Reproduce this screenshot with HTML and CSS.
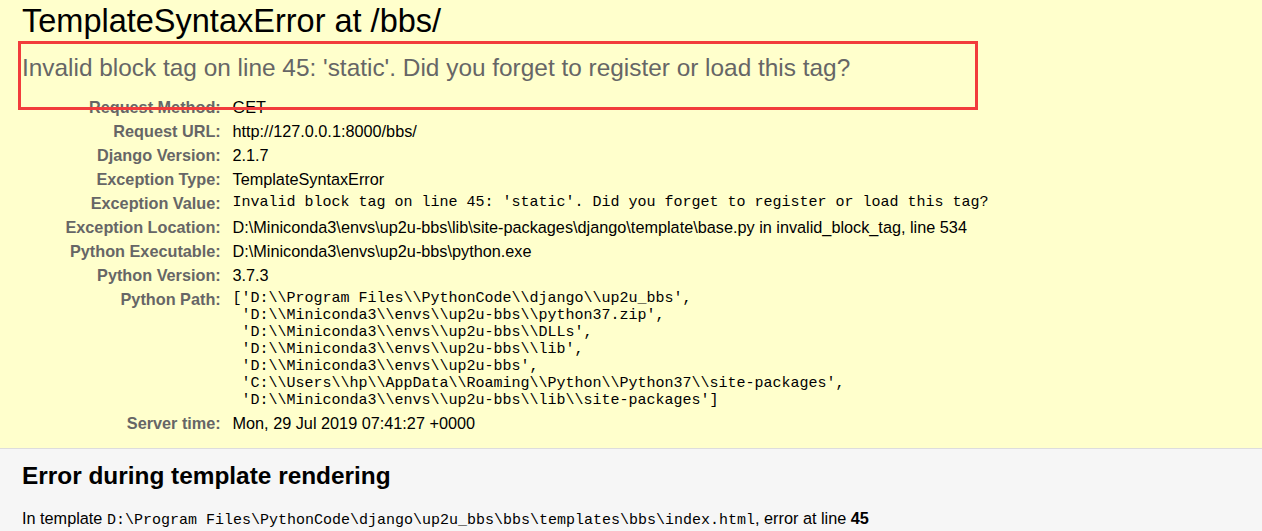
FILE: index.html
```html
<!DOCTYPE html>
<html lang="en">
<head>
<meta charset="utf-8">
<title>TemplateSyntaxError at /bbs/</title>
<link rel="stylesheet" href="styles.css">
</head>
<body>
<div class="summary">
  <h1 class="title">TemplateSyntaxError at /bbs/</h1>
  <pre class="exception-value">Invalid block tag on line 45: 'static'. Did you forget to register or load this tag?</pre>
  <table class="meta">
    <tbody>
      <tr><th>Request Method:</th><td>GET</td></tr>
      <tr><th>Request URL:</th><td>http://127.0.0.1:8000/bbs/</td></tr>
      <tr><th>Django Version:</th><td>2.1.7</td></tr>
      <tr><th>Exception Type:</th><td>TemplateSyntaxError</td></tr>
      <tr><th>Exception Value:</th><td><pre class="mono">Invalid block tag on line 45: 'static'. Did you forget to register or load this tag?</pre></td></tr>
      <tr><th>Exception Location:</th><td>D:\Miniconda3\envs\up2u-bbs\lib\site-packages\django\template\base.py in invalid_block_tag, line 534</td></tr>
      <tr><th>Python Executable:</th><td>D:\Miniconda3\envs\up2u-bbs\python.exe</td></tr>
      <tr><th>Python Version:</th><td>3.7.3</td></tr>
      <tr><th>Python Path:</th><td><pre class="mono">['D:\\Program Files\\PythonCode\\django\\up2u_bbs',
 'D:\\Miniconda3\\envs\\up2u-bbs\\python37.zip',
 'D:\\Miniconda3\\envs\\up2u-bbs\\DLLs',
 'D:\\Miniconda3\\envs\\up2u-bbs\\lib',
 'D:\\Miniconda3\\envs\\up2u-bbs',
 'C:\\Users\\hp\\AppData\\Roaming\\Python\\Python37\\site-packages',
 'D:\\Miniconda3\\envs\\up2u-bbs\\lib\\site-packages']</pre></td></tr>
      <tr><th>Server time:</th><td>Mon, 29 Jul 2019 07:41:27 +0000</td></tr>
    </tbody>
  </table>
</div>
<div class="template">
  <h2 class="section-title">Error during template rendering</h2>
  <p class="template-info">In template <code class="code">D:\Program Files\PythonCode\django\up2u_bbs\bbs\templates\bbs\index.html</code>, error at line <strong>45</strong></p>
</div>
<div class="annotation"></div>
</body>
</html>
```
FILE: styles.css
```css
* {
  margin: 0;
  padding: 0;
}

html, body {
  background: #f6f6f6;
}

body {
  font-family: "Liberation Sans", Arial, sans-serif;
  font-size: 16.25px;
  color: #000;
  position: relative;
  min-height: 531px;
}

.summary {
  background: #ffc;
  padding: 3px 22px 12px 22px;
  border-bottom: 1px solid #ddd;
}

.title {
  font-weight: normal;
  font-size: 32.5px;
  line-height: 37px;
}

.exception-value {
  font-family: "Liberation Sans", Arial, sans-serif;
  color: #666;
  font-size: 24.4px;
  line-height: 28px;
  margin: 13.5px 0 14px 0;
  white-space: pre-wrap;
}

.meta {
  border: none;
  border-collapse: collapse;
  width: 100%;
}

.meta th,
.meta td {
  vertical-align: top;
  line-height: 19px;
}

.meta th {
  width: 195px;
  text-align: right;
  color: #666;
  font-weight: bold;
  padding: 2.5px 8px 2.5px 3.75px;
}

.meta td {
  padding: 2.5px 3.75px;
}

.mono {
  font-family: "Liberation Mono", "Courier New", monospace;
  font-size: 15px;
  line-height: 17px;
  white-space: pre-wrap;
}

.template {
  background: #f6f6f6;
  padding: 13px 22px 10px 22px;
}

.section-title {
  font-size: 24.4px;
  font-weight: bold;
  line-height: 28px;
  margin-bottom: 19.5px;
}

.template-info {
  line-height: 19px;
}

.code {
  font-family: "Liberation Mono", "Courier New", monospace;
  font-size: 15px;
}

.annotation {
  position: absolute;
  left: 18px;
  top: 41px;
  width: 960px;
  height: 69px;
  box-sizing: border-box;
  border: 3px solid #f23c3c;
}
```
